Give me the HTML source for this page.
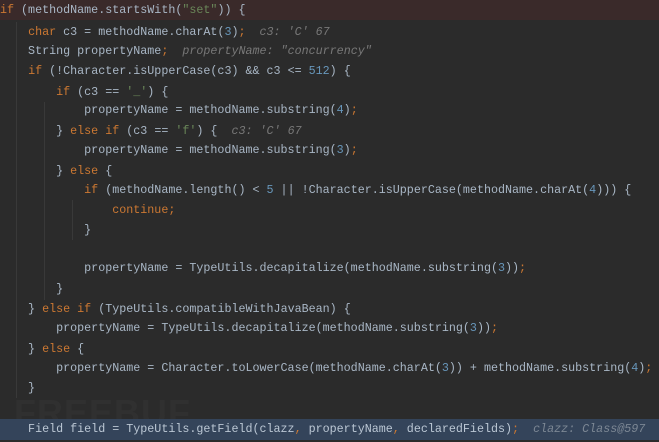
<!DOCTYPE html>
<html><head><meta charset="utf-8"><style>
html,body{margin:0;padding:0;}
body{width:659px;height:442px;background:#2b2b2b;overflow:hidden;position:relative;font-family:"Liberation Mono","DejaVu Sans Mono",monospace;font-size:11.7px;color:#a9b7c6;}
.l{position:absolute;left:0;height:20px;line-height:20px;white-space:pre;width:659px;}
.k{color:#cc7832}.n{color:#6897bb}.s{color:#6a8759}.h{color:#787878;font-style:italic}
.g{position:absolute;width:1px;background:#393939;}
.wm{position:absolute;left:14px;top:392px;font:bold 36px "Liberation Sans",sans-serif;color:#303030;letter-spacing:1px;}
</style></head><body>
<div style="position:absolute;left:0;top:0;width:659px;height:20px;background:#3a2a2a"></div>
<div class="wm">FREEBUF</div>
<div style="position:absolute;left:0;top:419px;width:659px;height:21px;background:#34445a"></div>
<div class="g" style="left:16px;top:22px;height:376px"></div>
<div class="g" style="left:44px;top:102px;height:198px"></div>
<div class="g" style="left:72px;top:200px;height:40px"></div>
<div class="l" style="top:0"><span class="k">if</span> (methodName.startsWith(<span class="s">"set"</span>)) {</div>
<div class="l" style="top:22px">    <span class="k">char</span> c3 = methodName.charAt(<span class="n">3</span>)<span class="k">;</span>  <span class="h">c3: 'C' 67</span></div>
<div class="l" style="top:41px">    String propertyName<span class="k">;</span>  <span class="h">propertyName: "concurrency"</span></div>
<div class="l" style="top:61px">    <span class="k">if</span> (!Character.isUpperCase(c3) &amp;&amp; c3 &lt;= <span class="n">512</span>) {</div>
<div class="l" style="top:82px">        <span class="k">if</span> (c3 == <span class="s">'_'</span>) {</div>
<div class="l" style="top:100px">            propertyName = methodName.substring(<span class="n">4</span>)<span class="k">;</span></div>
<div class="l" style="top:121px">        } <span class="k">else if</span> (c3 == <span class="s">'f'</span>) {  <span class="h">c3: 'C' 67</span></div>
<div class="l" style="top:140px">            propertyName = methodName.substring(<span class="n">3</span>)<span class="k">;</span></div>
<div class="l" style="top:161px">        } <span class="k">else</span> {</div>
<div class="l" style="top:180px">            <span class="k">if</span> (methodName.length() &lt; <span class="n">5</span> || !Character.isUpperCase(methodName.charAt(<span class="n">4</span>))) {</div>
<div class="l" style="top:200px">                <span class="k">continue;</span></div>
<div class="l" style="top:220px">            }</div>
<div class="l" style="top:258px">            propertyName = TypeUtils.decapitalize(methodName.substring(<span class="n">3</span>))<span class="k">;</span></div>
<div class="l" style="top:279px">        }</div>
<div class="l" style="top:299px">    } <span class="k">else if</span> (TypeUtils.compatibleWithJavaBean) {</div>
<div class="l" style="top:318px">        propertyName = TypeUtils.decapitalize(methodName.substring(<span class="n">3</span>))<span class="k">;</span></div>
<div class="l" style="top:339px">    } <span class="k">else</span> {</div>
<div class="l" style="top:358px">        propertyName = Character.toLowerCase(methodName.charAt(<span class="n">3</span>)) + methodName.substring(<span class="n">4</span>)<span class="k">;</span></div>
<div class="l" style="top:378px">    }</div>
<div class="l" style="top:419px;color:#bbc7d4">    Field field = TypeUtils.getField(clazz<span class="k">,</span> propertyName<span class="k">,</span> declaredFields)<span class="k">;</span>  <span class="h" style="color:#7c8794">clazz: Class@597</span></div>
</body></html>
